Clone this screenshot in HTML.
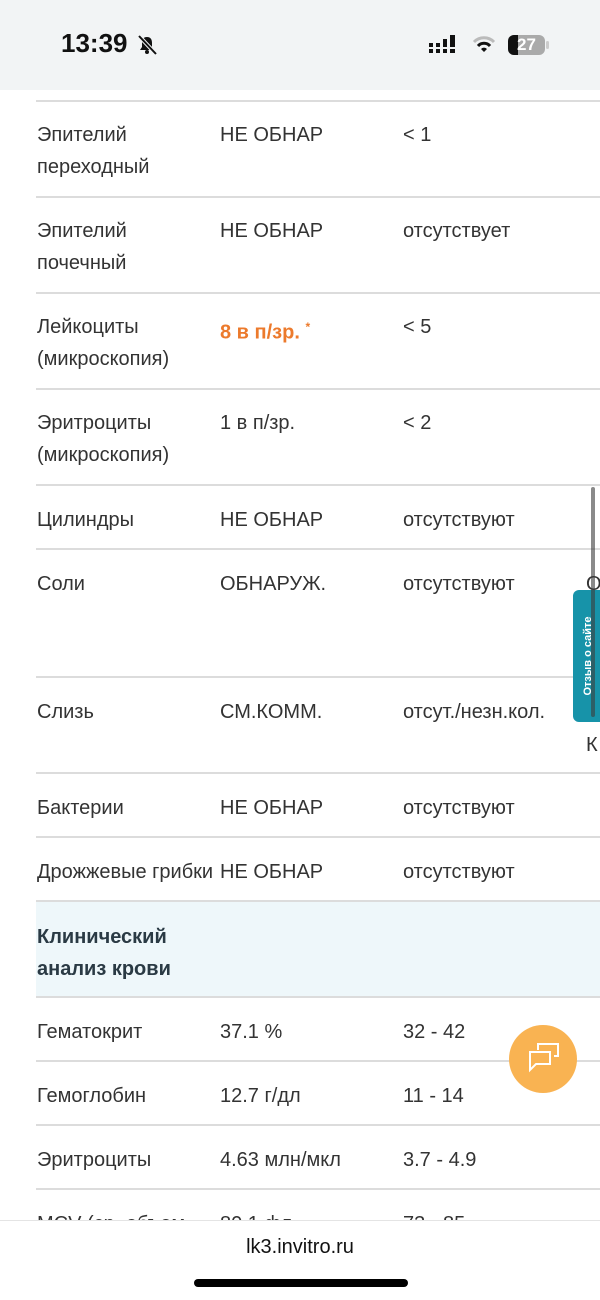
<!DOCTYPE html>
<html><head><meta charset="utf-8"><style>
*{margin:0;padding:0;box-sizing:border-box}
body{width:600px;height:1300px;position:relative;overflow:hidden;background:#fff;font-family:"Liberation Sans",sans-serif;color:#333}
.hdr{position:absolute;left:0;top:0;width:600px;height:90px;background:#f2f4f5}
.line{position:absolute;left:36px;right:0;height:2px;background:#dcdcdc}
.t{position:absolute;font-size:20px;line-height:32px;white-space:nowrap;margin-top:2px}
.sec{position:absolute;left:36px;right:0;top:902px;height:95px;background:#eef7fa}
</style></head><body>
<div class="hdr">
<div style="position:absolute;left:61px;top:28px;font-size:26px;font-weight:bold;color:#111">13:39</div>
<svg style="position:absolute;left:136px;top:34px" width="22" height="22" viewBox="0 0 22 22"><path d="M11 3c-4 0-5 3-5 6v4l-2 3h14l-2-3V9c0-3-1-6-5-6z" fill="#111"/><circle cx="11" cy="18" r="2" fill="#111"/><path d="M3 2l17 18" stroke="#f2f4f5" stroke-width="4"/><path d="M3 2l17 18" stroke="#111" stroke-width="2"/></svg>
<svg style="position:absolute;left:429px;top:35px" width="34" height="20"><g fill="#111"><rect x="0" y="8" width="4" height="4"/><rect x="0" y="14" width="4" height="4"/><rect x="7" y="8" width="4" height="4"/><rect x="7" y="14" width="4" height="4"/><rect x="14" y="4" width="4" height="8"/><rect x="14" y="14" width="4" height="4"/><rect x="21" y="0" width="5" height="12"/><rect x="21" y="14" width="5" height="4"/></g></svg>
<svg style="position:absolute;left:472px;top:36px" width="24" height="18" viewBox="0 0 24 18"><path d="M2 6a14 14 0 0 1 20 0" stroke="#bbb" stroke-width="3" fill="none"/><path d="M6 10a8 8 0 0 1 12 0" stroke="#111" stroke-width="3" fill="none"/><path d="M9 13l3 3 3-3a4 4 0 0 0-6 0z" fill="#111"/></svg>
<div style="position:absolute;left:508px;top:35px;width:37px;height:20px;border-radius:6px;background:#aaa;overflow:hidden"><div style="position:absolute;left:0;top:0;width:10px;height:20px;background:#111"></div><div style="position:absolute;left:9px;top:0;font-size:17px;font-weight:bold;color:#fff;line-height:20px">27</div></div>
<div style="position:absolute;left:546px;top:41px;width:3px;height:8px;background:#ccc;border-radius:2px"></div>
</div>

<div class="line" style="top:100px"></div>
<div class="t" style="left:37px;top:117px">Эпителий<br>переходный</div><div class="t" style="left:220px;top:117px">НЕ ОБНАР</div><div class="t" style="left:403px;top:117px">&lt; 1</div>
<div class="line" style="top:196px"></div>
<div class="t" style="left:37px;top:213px">Эпителий<br>почечный</div><div class="t" style="left:220px;top:213px">НЕ ОБНАР</div><div class="t" style="left:403px;top:213px">отсутствует</div>
<div class="line" style="top:292px"></div>
<div class="t" style="left:37px;top:309px">Лейкоциты<br>(микроскопия)</div><div class="t" style="left:220px;top:309px;color:#ec7a2c;font-weight:bold">8 в п/зр. <sup style="font-size:12px">*</sup></div><div class="t" style="left:403px;top:309px">&lt; 5</div>
<div class="line" style="top:388px"></div>
<div class="t" style="left:37px;top:405px">Эритроциты<br>(микроскопия)</div><div class="t" style="left:220px;top:405px">1 в п/зр.</div><div class="t" style="left:403px;top:405px">&lt; 2</div>
<div class="line" style="top:484px"></div>
<div class="t" style="left:37px;top:502px">Цилиндры</div><div class="t" style="left:220px;top:502px">НЕ ОБНАР</div><div class="t" style="left:403px;top:502px">отсутствуют</div>
<div class="line" style="top:548px"></div>
<div class="t" style="left:37px;top:566px">Соли</div><div class="t" style="left:220px;top:566px">ОБНАРУЖ.</div><div class="t" style="left:403px;top:566px">отсутствуют</div><div class="t" style="left:586px;top:566px">О</div>
<div class="line" style="top:676px"></div>
<div class="t" style="left:37px;top:694px">Слизь</div><div class="t" style="left:220px;top:694px">СМ.КОММ.</div><div class="t" style="left:403px;top:694px">отсут./незн.кол.</div><div class="t" style="left:586px;top:727px">К</div>
<div class="line" style="top:772px"></div>
<div class="t" style="left:37px;top:790px">Бактерии</div><div class="t" style="left:220px;top:790px">НЕ ОБНАР</div><div class="t" style="left:403px;top:790px">отсутствуют</div>
<div class="line" style="top:836px"></div>
<div class="t" style="left:37px;top:854px">Дрожжевые грибки</div><div class="t" style="left:220px;top:854px">НЕ ОБНАР</div><div class="t" style="left:403px;top:854px">отсутствуют</div>
<div class="line" style="top:900px"></div>
<div class="sec"></div>
<div class="t" style="left:37px;top:919px;font-weight:bold;color:#2a3a44">Клинический<br>анализ крови</div>
<div class="line" style="top:996px"></div>
<div class="t" style="left:37px;top:1014px">Гематокрит</div><div class="t" style="left:220px;top:1014px">37.1 %</div><div class="t" style="left:403px;top:1014px">32 - 42</div>
<div class="line" style="top:1060px"></div>
<div class="t" style="left:37px;top:1078px">Гемоглобин</div><div class="t" style="left:220px;top:1078px">12.7 г/дл</div><div class="t" style="left:403px;top:1078px">11 - 14</div>
<div class="line" style="top:1124px"></div>
<div class="t" style="left:37px;top:1142px">Эритроциты</div><div class="t" style="left:220px;top:1142px">4.63 млн/мкл</div><div class="t" style="left:403px;top:1142px">3.7 - 4.9</div>
<div class="line" style="top:1188px"></div>
<div class="t" style="left:37px;top:1206px">MCV (ср. объем</div><div class="t" style="left:220px;top:1206px">80.1 фл</div><div class="t" style="left:403px;top:1206px">73 - 85</div>

<div style="position:absolute;left:573px;top:590px;width:30px;height:132px;background:#1793a9;border-radius:6px 0 0 6px"></div>
<div style="position:absolute;left:588px;top:656px;transform:translate(-50%,-50%) rotate(-90deg);color:#fff;font-size:11px;font-weight:bold;white-space:nowrap">Отзыв о сайте</div>
<div style="position:absolute;left:591px;top:487px;width:4px;height:230px;background:rgba(60,60,60,.6);border-radius:2px"></div>

<div style="position:absolute;left:509px;top:1025px;width:68px;height:68px;border-radius:50%;background:#f9b352"></div>
<svg style="position:absolute;left:526px;top:1042px" width="36" height="34" viewBox="0 0 36 34" fill="none" stroke="#fff" stroke-width="2"><path d="M12 8V2h20v12h-4"/><path d="M3 10h21v12H10l-6 6V10z"/></svg>

<div style="position:absolute;left:0;top:1220px;width:600px;height:80px;background:#fff;border-top:1px solid #e4e4e4"></div>
<div style="position:absolute;left:0;top:1236px;width:600px;text-align:center;font-size:20px;color:#111">lk3.invitro.ru</div>
<div style="position:absolute;left:194px;top:1279px;width:214px;height:8px;border-radius:4px;background:#000"></div>
</body></html>
